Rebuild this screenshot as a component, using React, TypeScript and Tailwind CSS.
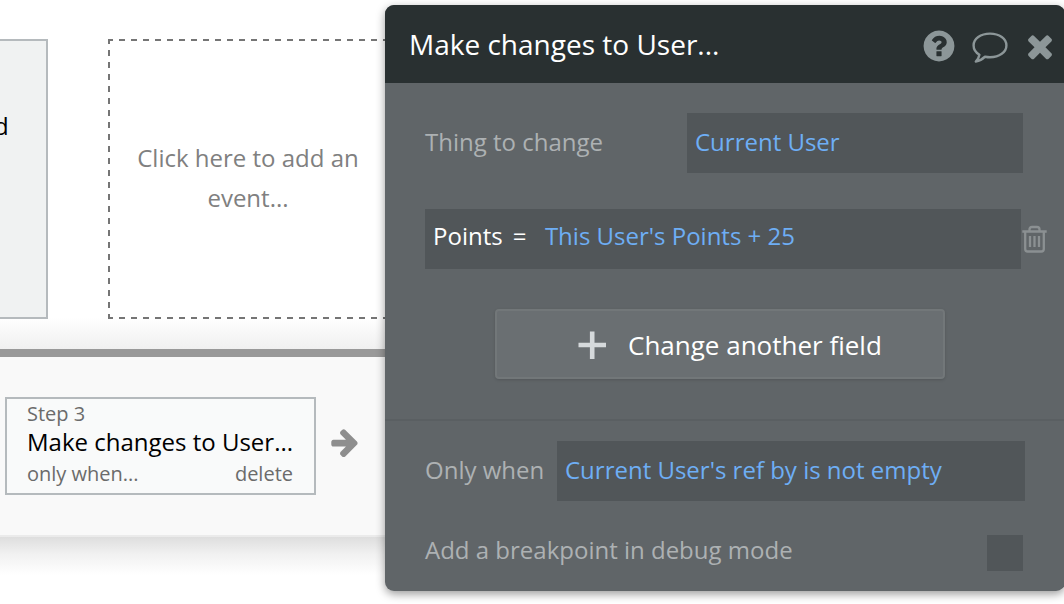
import type { ReactNode } from "react";

// Solid glyph icons share the same 1792 unit grid
function Glyph({ d, className }: { d: string; className: string }) {
  return (
    <svg viewBox="0 0 1792 1792" fill="currentColor" className={className}>
      <path d={d} />
    </svg>
  );
}

const icons = {
  question:
    "M1024 1376v-192q0-14-9-23t-23-9h-192q-14 0-23 9t-9 23v192q0 14 9 23t23 9h192q14 0 23-9t9-23zm256-672q0-88-55.5-163t-138.5-116-170-41q-243 0-371 213-15 24 8 42l132 100q7 6 19 6 16 0 25-12 53-68 86-92 34-24 86-24 48 0 85.5 26t37.5 59q0 38-20 61t-68 45q-63 28-115.5 86.5t-52.5 125.5v36q0 14 9 23t23 9h192q14 0 23-9t9-23q0-19 21.5-49.5t54.5-49.500q32-18 49-28.500t46-35 44.500-48 28-60.500 12.500-81zm384 192q0 209-103 385.500t-279.500 279.500-385.500 103-385.500-103-279.500-279.500-103-385.500 103-385.500 279.500-279.500 385.500-103 385.500 103 279.500 279.500 103 385.500z",
  close:
    "M1490 1322q0 40-28 68l-136 136q-28 28-68 28t-68-28l-294-294-294 294q-28 28-68 28t-68-28l-136-136q-28-28-28-68t28-68l294-294-294-294q-28-28-28-68t28-68l136-136q28-28 68-28t68 28l294 294 294-294q28-28 68-28t68 28l136 136q28 28 28 68t-28 68l-294 294 294 294q28 28 28 68z",
  arrow:
    "M1600 960q0 54-37 91l-651 651q-39 37-91 37-51 0-90-37l-75-75q-38-38-38-91t38-91l293-293h-704q-52 0-84.500-37.500t-32.500-90.500v-128q0-53 32.500-90.500t84.500-37.500h704l-293-294q-38-36-38-90t38-90l75-75q38-38 90-38 53 0 91 38l651 651q37 35 37 90z",
};

function CommentIcon() {
  return (
    <svg viewBox="0 0 38 34" fill="none" stroke="currentColor" strokeWidth="2.4" strokeLinejoin="round" className="h-[34px] w-[38px]">
      <path d="M19 3.600C28.500 3.600 35.400 8.800 35.400 15.400S28.500 27.200 19 27.200C17.300 27.200 15.600 27 14 26.700C11.600 29.200 8.500 30.900 4.800 31.500C6.800 29.500 8 27.400 8.400 24.700C4.800 22.500 2.600 19.200 2.600 15.400C2.600 8.800 9.500 3.600 19 3.600Z" />
    </svg>
  );
}

function TrashIcon() {
  return (
    <svg viewBox="0 0 26 28" fill="none" stroke="currentColor" strokeWidth="2.3" className="h-7 w-[26px]">
      <path d="M0.300 6.500H24.700M7.500 6V4.500Q7.500 2 10 2H15Q17.500 2 17.500 4.500V6" />
      <path d="M3.200 7V24Q3.200 26.500 5.700 26.500H19.300Q21.800 26.500 21.800 24V7" />
      <path d="M8 11V22M12.500 11V22M17 11V22" />
    </svg>
  );
}

// Evenly spaced dashes, which a dashed border does not guarantee
function DashedOutline() {
  return (
    <svg viewBox="0 0 280 280" fill="none" stroke="#757575" strokeWidth="2" strokeDasharray="6 6" strokeDashoffset="1" className="absolute inset-0 size-full">
      <path d="M0 1H280M0 279H280M1 0V280M279 0V280" />
    </svg>
  );
}

function Field({ className, children }: { className: string; children?: ReactNode }) {
  return (
    <div className={`h-[60px] bg-[#515659] px-2 text-[24px] leading-10 text-[#6eaef5] whitespace-nowrap ${className}`}>
      {children}
    </div>
  );
}

function WorkflowCanvas() {
  return (
    <div className="flex h-full flex-col">
      {/* Events */}
      <div className="flex h-[349px] gap-[60px] bg-linear-to-b from-white from-[91%] to-[#f0f0f0] pt-[39px]">
        <div className="h-[280px] w-12 border-2 border-l-0 border-[#b5babd] bg-[#f0f2f2] pt-[65px] text-[24px] leading-10 text-black">
          <span className="-ml-[6px]">d</span>
        </div>
        <div className="relative flex h-[280px] w-[280px] items-center justify-center bg-white px-5 pb-[2px] text-center text-[24px] leading-10 text-[#808080]">
          <DashedOutline />
          Click here to add an event...
        </div>
      </div>
      <div className="h-2 bg-[#999]" />

      {/* Actions */}
      <div className="flex h-[180px] items-start border-b-2 border-[#ebebeb] bg-[#f9f9f9] pt-10 pl-[5px]">
        <div className="h-[98px] w-[311px] border-2 border-[#b5babd] bg-[#f9fafa] pr-[21px] pl-5 text-[20px] text-[#6b6b6b]">
          <div className="leading-[30px]">Step 3</div>
          <div className="-mr-1 text-[24px] leading-[26px] text-black">Make changes to User...</div>
          <div className="flex justify-between pt-1 leading-[30px]">
            <span>only when...</span>
            <span>delete</span>
          </div>
        </div>
        <Glyph d={icons.arrow} className="mt-[28.500px] ml-[13px] size-8 text-[#8e8e8e]" />
      </div>
      <div className="h-[38px] bg-linear-to-b from-[#dedede] via-[#f1f1f1] via-45% to-white" />
    </div>
  );
}

function PropertyEditor() {
  return (
    <div className="absolute top-[5px] left-[385px] h-[586px] w-[680px] rounded-[9px] bg-[#606568] text-[24px] text-[#adb1b3] shadow-[0_3px_10px_rgba(0,0,0,0.4)]">
      <div className="flex h-[78px] items-center rounded-t-[9px] bg-[#293031] pr-[7px] pl-6 text-[#8c9698]">
        <div className="flex-1 text-[28px] leading-10 text-white">Make changes to User...</div>
        <Glyph d={icons.question} className="mt-1 size-9" />
        <div className="mt-[5px] ml-[14px]">
          <CommentIcon />
        </div>
        <Glyph d={icons.close} className="mt-1 ml-[13px] size-9" />
      </div>

      <div className="flex h-[338px] flex-col border-b-2 border-[#5a5f62] pt-[30px] pl-10">
        <div className="flex">
          <div className="w-[262px] pt-[9px] leading-10">Thing to change</div>
          <Field className="w-[336px] pt-[9px]">Current User</Field>
        </div>
        <div className="mt-9 flex">
          <Field className="flex w-[596px] pt-[7px]">
            <span className="text-white">Points</span>
            <span className="ml-[10px] text-white">=</span>
            <span className="ml-[18.500px]">This User's Points + 25</span>
          </Field>
          <div className="mt-4 ml-px text-[#8b9092]">
            <TrashIcon />
          </div>
        </div>
        <button className="mt-10 ml-[70px] flex h-[70px] w-[450px] items-center rounded border-2 border-[#727779] bg-[#6a6f72] pt-[2px] pl-[81px] text-[26px] leading-10 text-white shadow-[0_1px_3px_rgba(0,0,0,0.15)]">
          <svg viewBox="0 0 28 28" fill="none" stroke="#d5d9db" strokeWidth="4.6" className="size-7">
            <path d="M0.500 14H28M14.200 0.500V28" />
          </svg>
          <span className="ml-[22px]">Change another field</span>
        </button>
      </div>

      <div className="flex pt-5 pl-10">
        <div className="w-[132px] pt-[9px] leading-10">Only when</div>
        <Field className="w-[468px] pt-[9px]">Current User's ref by is not empty</Field>
      </div>
      <div className="mt-[29px] flex pl-10">
        <div className="w-[562px] leading-10">Add a breakpoint in debug mode</div>
        <div className="mt-[5px] size-9 bg-[#515659]" />
      </div>
    </div>
  );
}

export default function App() {
  return (
    <div className="relative h-[604px] w-[1064px] overflow-hidden bg-white font-['Open_Sans',sans-serif]">
      <WorkflowCanvas />
      <PropertyEditor />
    </div>
  );
}
